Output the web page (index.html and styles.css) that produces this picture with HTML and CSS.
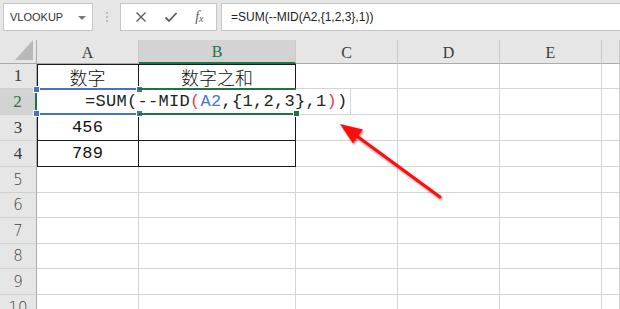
FILE: index.html
```html
<!DOCTYPE html>
<html lang="zh-CN">
<head>
  <meta charset="UTF-8" />
  <title>Excel - 数字之和</title>
  <link rel="stylesheet" href="styles.css">
</head>
<body>
  <div class="toolbar">
    <div class="namebox">
      <span>VLOOKUP</span>
      <svg class="drop" width="8" height="4" viewBox="0 0 8 4"><path d="M0 0H8L4 4Z" fill="#7a7a7a"/></svg>
    </div>
    <div class="dots"><i></i><i></i><i></i></div>
    <div class="fxbtns">
      <svg width="12" height="12" viewBox="0 0 12 12"><path d="M1.5 1.5L10.5 10.5M10.5 1.5L1.5 10.5" stroke="#5c5c5c" stroke-width="1.4" fill="none"/></svg>
      <svg width="14" height="12" viewBox="0 0 14 12"><path d="M1.5 6.5L5 10L12.5 2" stroke="#5c5c5c" stroke-width="1.8" fill="none"/></svg>
      <span class="fx">f<sub>x</sub></span>
    </div>
    <div class="fbar">=SUM(--MID(A2,{1,2,3},1))</div>
  </div>

  <div class="sheet">
    <!-- header row -->
    <div class="corner"></div>
    <div class="colhead">A</div>
    <div class="colhead sel">B</div>
    <div class="colhead">C</div>
    <div class="colhead">D</div>
    <div class="colhead">E</div>
    <div class="colhead"></div>

    <!-- row 1 -->
    <div class="rowhead">1</div>
    <div class="cell tb tb-l tb-t cjk">数字</div>
    <div class="cell tb tb-t cjk">数字之和</div>
    <div class="cell"></div><div class="cell"></div><div class="cell"></div><div class="cell"></div>

    <!-- row 2 -->
    <div class="rowhead sel">2</div>
    <div class="cell tb tb-l"></div>
    <div class="cell tb"></div>
    <div class="cell"></div><div class="cell"></div><div class="cell"></div><div class="cell"></div>

    <!-- row 3 -->
    <div class="rowhead">3</div>
    <div class="cell tb tb-l num">456</div>
    <div class="cell tb"></div>
    <div class="cell"></div><div class="cell"></div><div class="cell"></div><div class="cell"></div>

    <!-- row 4 -->
    <div class="rowhead">4</div>
    <div class="cell tb tb-l num">789</div>
    <div class="cell tb"></div>
    <div class="cell"></div><div class="cell"></div><div class="cell"></div><div class="cell"></div>

    <div class="rowhead sans">5</div>
    <div class="cell"></div><div class="cell"></div><div class="cell"></div><div class="cell"></div><div class="cell"></div><div class="cell"></div>
    <div class="rowhead sans">6</div>
    <div class="cell"></div><div class="cell"></div><div class="cell"></div><div class="cell"></div><div class="cell"></div><div class="cell"></div>
    <div class="rowhead sans">7</div>
    <div class="cell"></div><div class="cell"></div><div class="cell"></div><div class="cell"></div><div class="cell"></div><div class="cell"></div>
    <div class="rowhead sans">8</div>
    <div class="cell"></div><div class="cell"></div><div class="cell"></div><div class="cell"></div><div class="cell"></div><div class="cell"></div>
    <div class="rowhead sans">9</div>
    <div class="cell"></div><div class="cell"></div><div class="cell"></div><div class="cell"></div><div class="cell"></div><div class="cell"></div>
    <div class="rowhead sans">10</div>
    <div class="cell"></div><div class="cell"></div><div class="cell"></div><div class="cell"></div><div class="cell"></div><div class="cell"></div>

    <!-- in-cell editor for B2, overflowing to both sides -->
    <div class="editor">=SUM(--MID<span class="red">(</span><span class="blue">A2</span>,{1,2,3},1<span class="red">)</span>)</div>
    <div class="ref-box"><i class="h tl"></i><i class="h tr"></i><i class="h bl"></i><i class="h br"></i></div>
    <div class="active-box"><i class="h br"></i></div>
  </div>

  <svg class="arrow" width="620" height="309" viewBox="0 0 620 309">
    <defs>
      <filter id="shadow" x="-20%" y="-20%" width="140%" height="140%">
        <feDropShadow dx="1" dy="1.5" stdDeviation="1.2" flood-color="#000" flood-opacity="0.45"/>
      </filter>
    </defs>
    <g filter="url(#shadow)">
      <line x1="440" y1="197" x2="354" y2="134" stroke="#ff1010" stroke-width="3" stroke-linecap="round"/>
      <path d="M340 124L363 129.5L353 143.5Z" fill="#ff1010"/>
    </g>
  </svg>
</body>
</html>
```

FILE: styles.css
```css
body {
  margin: 0;
  width: 620px;
  height: 309px;
  overflow: hidden;
  position: relative;
  background: #e6e6e6;
  font-family: "Liberation Sans", Arial, sans-serif;
}

/* formula bar strip */
.toolbar {
  height: 40px;
  display: flex;
  align-items: flex-start;
  padding: 3px 0 0 3px;
  box-sizing: border-box;
}

.namebox {
  width: 90px;
  height: 28px;
  box-sizing: border-box;
  background: #fff;
  border: 1px solid #c6c6c6;
  display: flex;
  align-items: center;
  justify-content: space-between;
  padding: 0 6px 0 6px;
  font-size: 11px;
  color: #333;
}

.namebox .drop {
  margin-top: 1px;
}

.dots {
  width: 27px;
  height: 28px;
  display: flex;
  flex-direction: column;
  align-items: center;
  justify-content: center;
  gap: 2px;
}

.dots i {
  width: 2px;
  height: 2px;
  background: #bdbdbd;
}

.fxbtns {
  width: 97px;
  height: 28px;
  box-sizing: border-box;
  background: #fff;
  border: 1px solid #c6c6c6;
  display: flex;
  align-items: center;
  justify-content: space-around;
  padding: 0 4px 0 6px;
}

.fx {
  font-family: "Liberation Serif", serif;
  font-style: italic;
  font-size: 14px;
  color: #5c5c5c;
}

.fx sub {
  font-size: 10px;
  vertical-align: -1px;
}

.fbar {
  flex: 1;
  height: 28px;
  margin-left: 4px;
  box-sizing: border-box;
  background: #fff;
  border: 1px solid #c6c6c6;
  border-right: none;
  padding-left: 9px;
  font-size: 12px;
  line-height: 26px;
  color: #222;
}

/* grid */
.sheet {
  position: relative;
  display: grid;
  grid-template-columns: 37px 102px 157px 102px 102px 102px 1fr;
  grid-template-rows: 24px 25px 26px 26px 26px 26px 25px 26px 25px 26px 26px;
  background: #fff;
}

.corner {
  background: #e6e6e6;
  border-right: 1px solid #ababab;
  border-bottom: 1px solid #ababab;
  position: relative;
}

.corner::after {
  content: "";
  position: absolute;
  right: 3px;
  bottom: 3px;
  width: 18px;
  height: 20px;
  background: #b9b9b9;
  clip-path: polygon(100% 0, 100% 100%, 0 100%);
}

.colhead {
  background: #e6e6e6;
  border-right: 1px solid #c9c9c9;
  border-bottom: 1px solid #ababab;
  font-family: "Liberation Serif", serif;
  font-size: 16px;
  color: #3a3a3a;
  display: flex;
  align-items: center;
  justify-content: center;
  padding-top: 2px;
}

.colhead.sel {
  background: #d3d3d3;
  color: #217346;
  border-bottom: 2px solid #217346;
}

.rowhead {
  background: #e6e6e6;
  border-right: 1px solid #ababab;
  border-bottom: 1px solid #d0d0d0;
  font-family: "Liberation Serif", serif;
  font-size: 17px;
  color: #3a3a3a;
  display: flex;
  align-items: center;
  justify-content: center;
}

.rowhead.sans {
  font-family: "DejaVu Sans", sans-serif;
  font-weight: 300;
  font-size: 15px;
  color: #444;
}

.rowhead.sel {
  background: #d3d3d3;
  color: #217346;
  border-right: 2px solid #217346;
}

.cell {
  border-right: 1px solid #d4d4d4;
  border-bottom: 1px solid #d4d4d4;
  display: flex;
  align-items: center;
  justify-content: center;
  color: #111;
}

/* table border A1:B4 */
.cell.tb {
  border-right-color: #1a1a1a;
  border-bottom-color: #1a1a1a;
}

.cell.tb-l {
  box-shadow: inset 1px 0 0 #1a1a1a;
}

.cell.tb-t {
  box-shadow: inset 0 1px 0 #1a1a1a;
}

.cell.tb-l.tb-t {
  box-shadow: inset 1px 1px 0 #1a1a1a;
}

.cjk {
  font-family: "Noto Sans CJK SC", sans-serif;
  font-weight: 300;
  font-size: 18px;
  padding-top: 1px;
}

.num {
  font-family: "Liberation Mono", monospace;
  font-size: 17px;
  letter-spacing: 0.2px;
}

/* editor overlay */
.editor {
  position: absolute;
  left: 37px;
  top: 49px;
  width: 314px;
  height: 25px;
  background: #fff;
  border-right: 1px solid #d4d4d4;
  padding-left: 48px;
  box-sizing: border-box;
  font-family: "Liberation Mono", monospace;
  font-size: 17px;
  letter-spacing: 0.3px;
  line-height: 26px;
  color: #222;
  white-space: nowrap;
}

.red { color: #e5444f; }
.blue { color: #4a78d0; }

.ref-box,
.active-box {
  position: absolute;
  top: 48px;
  height: 27px;
  box-sizing: border-box;
}

.ref-box {
  left: 36px;
  width: 103px;
  border-top: 2px solid #4472c4;
  border-bottom: 2px solid #4472c4;
}

.active-box {
  left: 138px;
  width: 158px;
  border-top: 2px solid #217346;
  border-bottom: 2px solid #217346;
}

.h {
  position: absolute;
  width: 5px;
  height: 5px;
  background: #4472c4;
  border: 1px solid #fff;
  box-sizing: content-box;
}

.active-box .h { background: #217346; }

.h.tl { left: -3px; top: -4px; }
.h.tr { right: -4px; top: -4px; }
.h.bl { left: -3px; bottom: -4px; }
.h.br { right: -4px; bottom: -4px; }

.arrow {
  position: absolute;
  left: 0;
  top: 0;
  pointer-events: none;
}
```
